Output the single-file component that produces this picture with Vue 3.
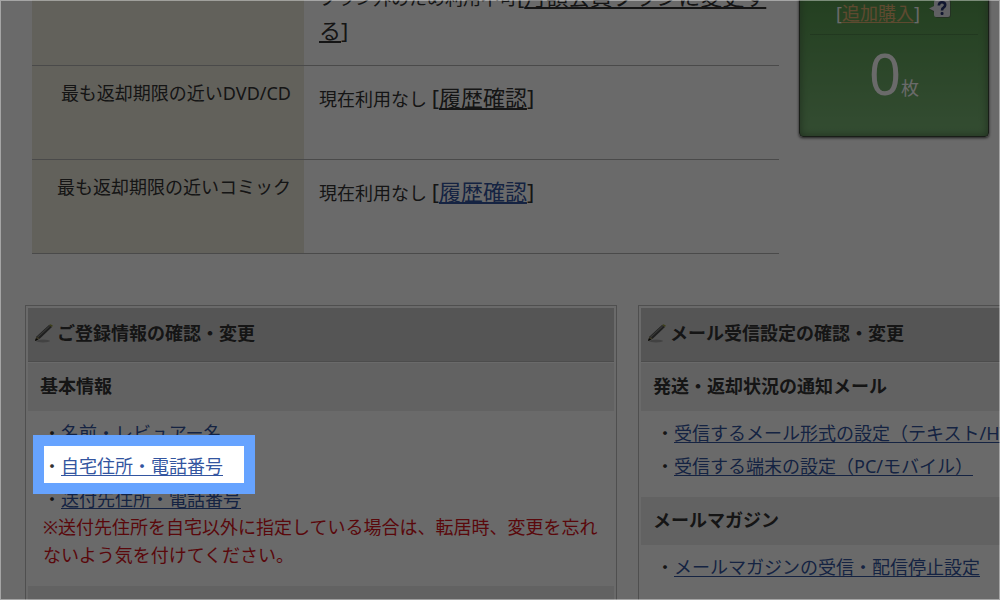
<script setup>
const loans = [
  { title: '最も返却期限の近いDVD/CD', status: '現在利用なし', visited: true },
  { title: '最も返却期限の近いコミック', status: '現在利用なし', visited: false },
]

const cards = [
  {
    title: 'ご登録情報の確認・変更',
    sections: [
      {
        title: '基本情報',
        links: ['名前・レビュアー名', '自宅住所・電話番号', '送付先住所・電話番号'],
        active: 1,
        note: '※送付先住所を自宅以外に指定している場合は、転居時、変更を忘れないよう気を付けてください。',
      },
      { title: '', links: [] },
    ],
  },
  {
    title: 'メール受信設定の確認・変更',
    sections: [
      {
        title: '発送・返却状況の通知メール',
        links: ['受信するメール形式の設定（テキスト/HTML）', '受信する端末の設定（PC/モバイル）'],
      },
      { title: 'メールマガジン', links: ['メールマガジンの受信・配信停止設定'] },
    ],
  },
]
</script>

<template>
  <div class="page">
    <div class="top">
      <table class="status">
        <tbody>
          <tr>
            <th scope="row"></th>
            <td>プラン外のため利用不可<span class="action">[<a href="#" class="visited">月額会員プランに変更する</a>]</span></td>
          </tr>
          <tr v-for="loan in loans" :key="loan.title">
            <th scope="row">{{ loan.title }}</th>
            <td>{{ loan.status }} <span class="action">[<a href="#" :class="{ visited: loan.visited }">履歴確認</a>]</span></td>
          </tr>
        </tbody>
      </table>
      <aside class="ticket">
        <div class="buy">
          <span>[<a href="#">追加購入</a>]</span>
          <button class="help" type="button" aria-label="ヘルプ">
            <svg width="24" height="20" viewBox="0 0 24 20">
              <path d="M1 10 7 6V3q0-3 3-3h10q3 0 3 3v13q0 3-3 3H10q-3 0-3-3v-2z" fill="#555" opacity=".5" />
              <path d="M1 9.500 6 7V3q0-2 2-2h12q2 0 2 2v13q0 2-2 2H8q-2 0-2-2v-4z" fill="#e6e6ee" />
              <path d="M10.800 6.500q.3-3.200 3.200-3.200 3.200 0 3.200 2.800 0 1.500-1.700 2.600-1.500.9-1.500 2.800" fill="none" stroke="#2b3673" stroke-width="2.600" />
              <rect x="12.600" y="13" width="2.900" height="2.900" rx="1" fill="#2b3673" />
            </svg>
          </button>
        </div>
        <p class="count"><strong>0</strong>枚</p>
      </aside>
    </div>

    <div class="cards">
      <section v-for="card in cards" :key="card.title" class="card">
        <h2>
          <svg width="20" height="20" viewBox="0 0 20 20" aria-hidden="true">
            <ellipse cx="9" cy="18" rx="7" ry="1.500" fill="#8d8d8d" opacity=".7" />
            <path d="M1 18 2.500 13.500 15 2 18 4 6 15.500z" fill="#4c4c4c" />
            <path d="M3.200 13.700 15 3 15.900 3.600 4.200 14.300z" fill="#8c8d88" />
            <path d="M15 2 16.500 1.200 18.800 2.600 18 4z" fill="#8f963c" />
            <path d="M1 18 2.500 13.500 6 15.500z" fill="#8c8460" />
            <path d="M1 18 2 15.200 4.200 16.500z" fill="#111" />
          </svg>
          {{ card.title }}
        </h2>
        <template v-for="section in card.sections" :key="section.title">
          <h3>{{ section.title }}</h3>
          <div class="body">
            <ul>
              <li v-for="(link, i) in section.links" :key="link">
                ・<a href="#">{{ link }}</a>
                <span v-if="section.active === i" class="spotlight"></span>
              </li>
            </ul>
            <p v-if="section.note" class="note">{{ section.note }}</p>
          </div>
        </template>
      </section>
    </div>
  </div>
</template>

<style>
body {
  margin: 0;
}
</style>

<style scoped>
.page {
  position: relative;
  height: 100vh;
  overflow: hidden;
  background: #fff;
  color: #333;
  font: 18px/28px "Noto Sans", "Noto Sans CJK JP", sans-serif;
}
.page::after {
  content: "";
  position: absolute;
  inset: 0;
  z-index: 3;
  border: 1px solid rgba(255, 255, 255, 0.4);
  pointer-events: none;
}
a {
  color: #3355a0;
  text-underline-offset: 2px;
}
a.visited {
  color: #333;
}
.top {
  display: grid;
  grid-template-columns: minmax(0, 1fr) 190px;
  align-items: start;
  gap: 20px;
  margin-top: -35px;
  padding: 0 11px 0 32px;
}
.status {
  width: 100%;
  border-collapse: separate;
  border-spacing: 0;
  line-height: 34px;
}
.status tr {
  height: 94px;
}
.status th,
.status td {
  box-sizing: border-box;
  vertical-align: top;
  border-bottom: 1px solid #b2b2b2;
}
.status th {
  width: 272px;
  padding: 10px 13px 10px 10px;
  background: #ece9dc;
  font-weight: 400;
  text-align: right;
}
.status td {
  padding: 16px 10px 16px 15px;
}
.action {
  font-size: 22px;
  line-height: 1;
}
.ticket {
  box-sizing: border-box;
  height: 172px;
  padding: 33px 10px 0;
  border: 1px solid #3c4a3a;
  border-radius: 4px;
  background: linear-gradient(#579a50 20%, #7db878);
  box-shadow: inset 0 0 8px #4c7049, 0 1px 3px #444;
  color: #fff;
}
.buy {
  display: flex;
  gap: 8px;
  padding: 0 0 7px 26px;
  border-bottom: 1px solid rgba(60, 100, 60, 0.4);
}
.buy a {
  color: #e3b375;
}
.help {
  width: 24px;
  height: 20px;
  padding: 0;
  border: 0;
  background: none;
}
.help svg {
  display: block;
}
.count {
  margin: 10px 0 0;
  text-align: center;
  line-height: 56px;
}
.count strong {
  font-size: 56px;
  font-weight: 400;
}
.cards {
  display: grid;
  grid-template-columns: repeat(2, minmax(592px, 1fr));
  align-items: start;
  gap: 21px;
  margin-top: 51px;
  padding-left: 25px;
}
.card {
  box-sizing: border-box;
  padding: 2px;
  border: 1px solid #bebebe;
}
h2,
h3 {
  margin: 0;
  font-size: 18px;
}
h2 {
  display: flex;
  align-items: center;
  gap: 3px;
  height: 49px;
  padding: 0 6px 4px;
  margin-bottom: 1px;
  border-bottom: 1px solid #b8b8b8;
  background: #cdcdcd;
}
h3 {
  height: 28px;
  padding: 9px 12px 11px;
  background: #ececec;
}
.body {
  padding: 8px 8px 17px 15px;
}
ul {
  display: flex;
  flex-direction: column;
  gap: 5px;
  margin: 0;
  padding: 0;
  list-style: none;
}
li {
  position: relative;
  white-space: nowrap;
}
.note {
  margin: 0;
  color: #d8141c;
}
.spotlight {
  position: absolute;
  z-index: 2;
  top: -17px;
  left: -10px;
  width: 200px;
  height: 37px;
  border: 11px solid #66a3ff;
  box-shadow: 0 0 0 2000px rgba(0, 0, 0, 0.584);
  pointer-events: none;
}
</style>
